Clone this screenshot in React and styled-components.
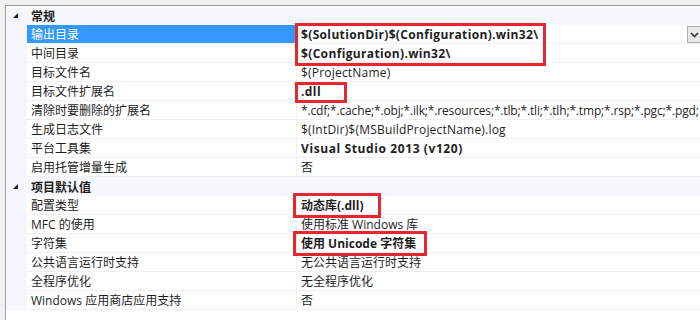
import React from "react";
import styled, { createGlobalStyle } from "styled-components";

const Global = createGlobalStyle`
  html, body { margin: 0; padding: 0; background: #f0f0f0; }
  body { width: 700px; height: 320px; overflow: hidden; }
`;

const Frame = styled.div`
  width: 700px;
  height: 320px;
  box-sizing: border-box;
  padding: 5px 0 0 5px;
  background: #f0f0f0;
  position: relative;
  font-family: "Open Sans", "Noto Sans CJK SC", sans-serif;
  font-size: 12px;
  color: #1e1e1e;
`;

const Panel = styled.div`
  height: 100%;
  background: #ffffff;
  border-top: 1px solid #a0a0a0;
  border-left: 1px solid #a0a0a0;
  display: flex;
  flex-direction: column;
`;

const Row = styled.div`
  display: grid;
  grid-template-columns: 21px 270px 1fr;
  height: 19px;
  flex: none;
`;

const Gutter = styled.div`
  background: #f5f7fa;
  display: flex;
  align-items: center;
  justify-content: center;
`;

const HeaderCell = styled.div`
  grid-column: 2 / 4;
  background: #f5f7fa;
  font-weight: bold;
  padding: 1px 0 0 4px;
  line-height: 18px;
  font-family: "Noto Sans CJK SC", sans-serif;
`;

const NameCell = styled.div`
  box-sizing: border-box;
  height: 19px;
  padding: 1px 0 0 4px;
  line-height: 17px;
  border-bottom: 1px solid #eef0f3;
  border-right: 1px solid #eef0f3;
  background: ${(p) => (p.$selected ? "#3399ff" : "transparent")};
  color: ${(p) => (p.$selected ? "#ffffff" : "#1e1e1e")};
  white-space: nowrap;
  overflow: hidden;
`;

const ValueCell = styled.div`
  box-sizing: border-box;
  display: flex;
  align-items: flex-start;
  padding-left: 4px;
  height: 19px;
  border-bottom: 1px solid #eef0f3;
  font-weight: ${(p) => (p.$bold ? "bold" : "normal")};
  letter-spacing: ${(p) => p.$spacing || 0}px;
  white-space: nowrap;
  overflow: hidden;
`;

const ValueText = styled.span`
  padding-top: 1px;
  line-height: 17px;
  flex: 1;
  overflow: hidden;
`;

const DropButton = styled.div`
  flex: none;
  width: 13px;
  height: 17px;
  margin-top: 1px;
  box-sizing: border-box;
  border: 1px solid #acacac;
  border-right: none;
  background: #e8e8e8;
  display: flex;
  align-items: center;
  justify-content: center;
`;

const Filler = styled.div`
  flex: 1;
  display: grid;
  grid-template-columns: 21px 1fr;
`;

const Mark = styled.div`
  position: absolute;
  border: 3px solid #e8262e;
  box-sizing: border-box;
  pointer-events: none;
`;

const Expander = () => (
  <svg width="6" height="6" viewBox="0 0 6 6" style={{ marginLeft: -2 }}>
    <polygon points="5,0 5,5 0,5" fill="#1e1e1e" />
  </svg>
);

const Chevron = () => (
  <svg width="9" height="6" viewBox="0 0 9 6">
    <polyline points="1,1 4.5,4.5 8,1" fill="none" stroke="#333" strokeWidth="1.6" />
  </svg>
);

const groups = [
  {
    title: "常规",
    rows: [
      { name: "输出目录", value: "$(SolutionDir)$(Configuration).win32\\", bold: true, spacing: 0.35, selected: true },
      { name: "中间目录", value: "$(Configuration).win32\\", bold: true, spacing: 0.35 },
      { name: "目标文件名", value: "$(ProjectName)", spacing: 0.2 },
      { name: "目标文件扩展名", value: ".dll", bold: true, spacing: 0.4 },
      { name: "清除时要删除的扩展名", value: "*.cdf;*.cache;*.obj;*.ilk;*.resources;*.tlb;*.tli;*.tlh;*.tmp;*.rsp;*.pgc;*.pgd;", spacing: -0.16 },
      { name: "生成日志文件", value: "$(IntDir)$(MSBuildProjectName).log", spacing: 0.2 },
      { name: "平台工具集", value: "Visual Studio 2013 (v120)", bold: true, spacing: 0.6 },
      { name: "启用托管增量生成", value: "否" },
    ],
  },
  {
    title: "项目默认值",
    rows: [
      { name: "配置类型", value: "动态库(.dll)", bold: true },
      { name: "MFC 的使用", value: "使用标准 Windows 库" },
      { name: "字符集", value: "使用 Unicode 字符集", bold: true },
      { name: "公共语言运行时支持", value: "无公共语言运行时支持" },
      { name: "全程序优化", value: "无全程序优化" },
      { name: "Windows 应用商店应用支持", value: "否" },
    ],
  },
];

const marks = [
  { left: 295, top: 23, width: 251, height: 43 },
  { left: 295, top: 82, width: 52, height: 21 },
  { left: 293, top: 193, width: 88, height: 25 },
  { left: 293, top: 231, width: 134, height: 25 },
];

export default function App() {
  return (
    <>
      <Global />
      <Frame>
        <Panel>
          {groups.map((g) => (
            <React.Fragment key={g.title}>
              <Row>
                <Gutter>
                  <Expander />
                </Gutter>
                <HeaderCell>{g.title}</HeaderCell>
              </Row>
              {g.rows.map((r) => (
                <Row key={r.name}>
                  <Gutter />
                  <NameCell $selected={r.selected}>{r.name}</NameCell>
                  <ValueCell $bold={r.bold} $spacing={r.spacing}>
                    <ValueText>{r.value}</ValueText>
                    {r.selected && (
                      <DropButton>
                        <Chevron />
                      </DropButton>
                    )}
                  </ValueCell>
                </Row>
              ))}
            </React.Fragment>
          ))}
          <Filler />
        </Panel>
        {marks.map((m, i) => (
          <Mark key={i} style={{ left: m.left, top: m.top, width: m.width, height: m.height }} />
        ))}
      </Frame>
    </>
  );
}
